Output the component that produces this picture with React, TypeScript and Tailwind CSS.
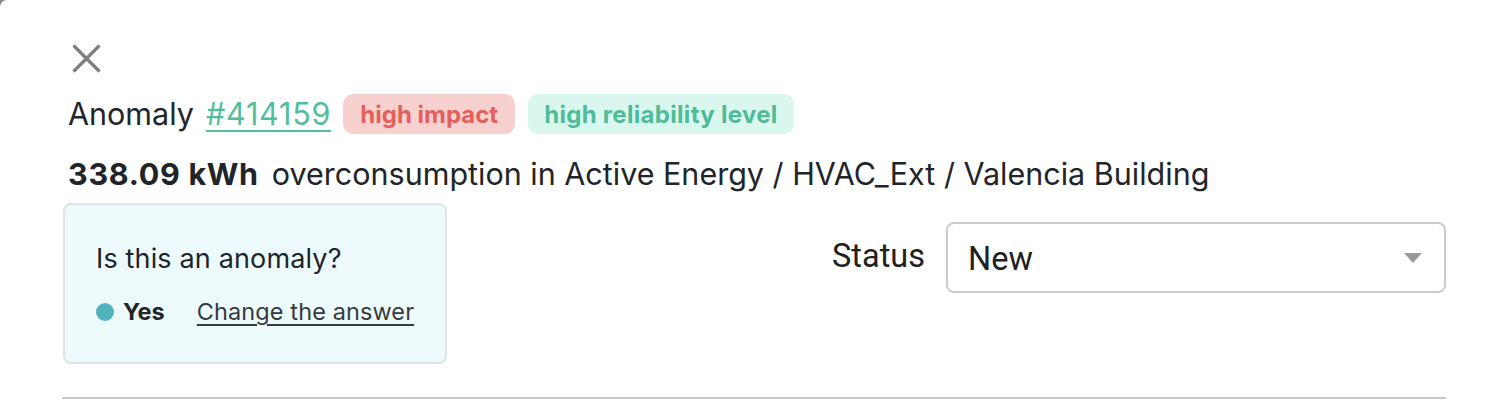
import React from "react";

export default function App() {
  return (
    <div className="w-[1498px] h-[416px] bg-[#8a8a8a] overflow-hidden">
      <div
        className="w-full h-full bg-white rounded-tl-[7px] pl-[62px] pr-[52px] pt-[44px] text-[#212529]"
        style={{ fontFamily: "Inter, 'Noto Sans', sans-serif" }}
      >
        <button className="block w-[29px] h-[29px] ml-[10px] text-[#7f7f7f]" aria-label="Close">
          <svg width="29" height="29" viewBox="0 0 29 29" fill="none" stroke="currentColor" strokeWidth="3.2">
            <line x1="1.5" y1="1.5" x2="27.5" y2="27.5" />
            <line x1="27.5" y1="1.5" x2="1.5" y2="27.5" />
          </svg>
        </button>

        <div className="mt-[21px] ml-[6px] flex items-center h-[40px] text-[30.5px]">
          <span>Anomaly</span>
          <a href="#" className="ml-[12px] tracking-[0.8px] text-[#52bf9c] underline underline-offset-[5px] decoration-[2px]">
            #414159
          </a>
          <span className="ml-[12px] h-[40px] px-[17px] pt-[2px] flex items-center rounded-[10px] bg-[#f6d1cf] text-[#e4605a] font-bold text-[24px]">
            high impact
          </span>
          <span className="ml-[13px] h-[40px] px-[16px] pt-[2px] flex items-center rounded-[10px] bg-[#d9f7ef] text-[#4fbb98] font-bold text-[24px] tracking-[0.3px]">
            high reliability level
          </span>
        </div>

        <div className="mt-[20px] ml-[6px] flex items-center h-[40px] text-[30.5px]">
          <span className="font-bold tracking-[0.7px]">338.09 kWh</span>
          <span className="ml-[13px]">overconsumption in Active Energy / HVAC_Ext / Valencia Building</span>
        </div>

        <div className="mt-[9px] flex items-start justify-between">
          <div className="ml-[1px] w-[384px] h-[161px] rounded-[8px] border-2 border-[#e0e3e5] bg-[#edfafc] pl-[31px] pt-[36px]">
            <div className="text-[27px] leading-[36px] tracking-[0.15px]">Is this an anomaly?</div>
            <div className="mt-[20px] flex items-center text-[23.5px] leading-[30px]">
              <span className="w-[18px] h-[18px] rounded-full bg-[#4fb2bd]" />
              <span className="ml-[9px] font-bold">Yes</span>
              <a href="#" className="ml-[32px] text-[#343a40] underline underline-offset-[4px] decoration-[1.5px] tracking-[0.1px]">
                Change the answer
              </a>
            </div>
          </div>

          <div className="mt-[19px] flex items-center" style={{ fontFamily: "Roboto, 'Liberation Sans', sans-serif" }}>
            <span className="text-[32.5px] text-[#212121] mb-[3px]">Status</span>
            <div className="ml-[21px] w-[500px] h-[71px] rounded-[8px] border-2 border-[#cccccc] flex items-center justify-between pl-[20px] pr-[22px]">
              <span className="text-[32.5px] text-[#212121] mt-[3px]">New</span>
              <svg width="18" height="10" viewBox="0 0 18 10">
                <polygon points="0,0 18,0 9,10" fill="#999999" />
              </svg>
            </div>
          </div>
        </div>

        <div className="mt-[33px] h-[2px] bg-[#c8c8c8]" />
      </div>
    </div>
  );
}
